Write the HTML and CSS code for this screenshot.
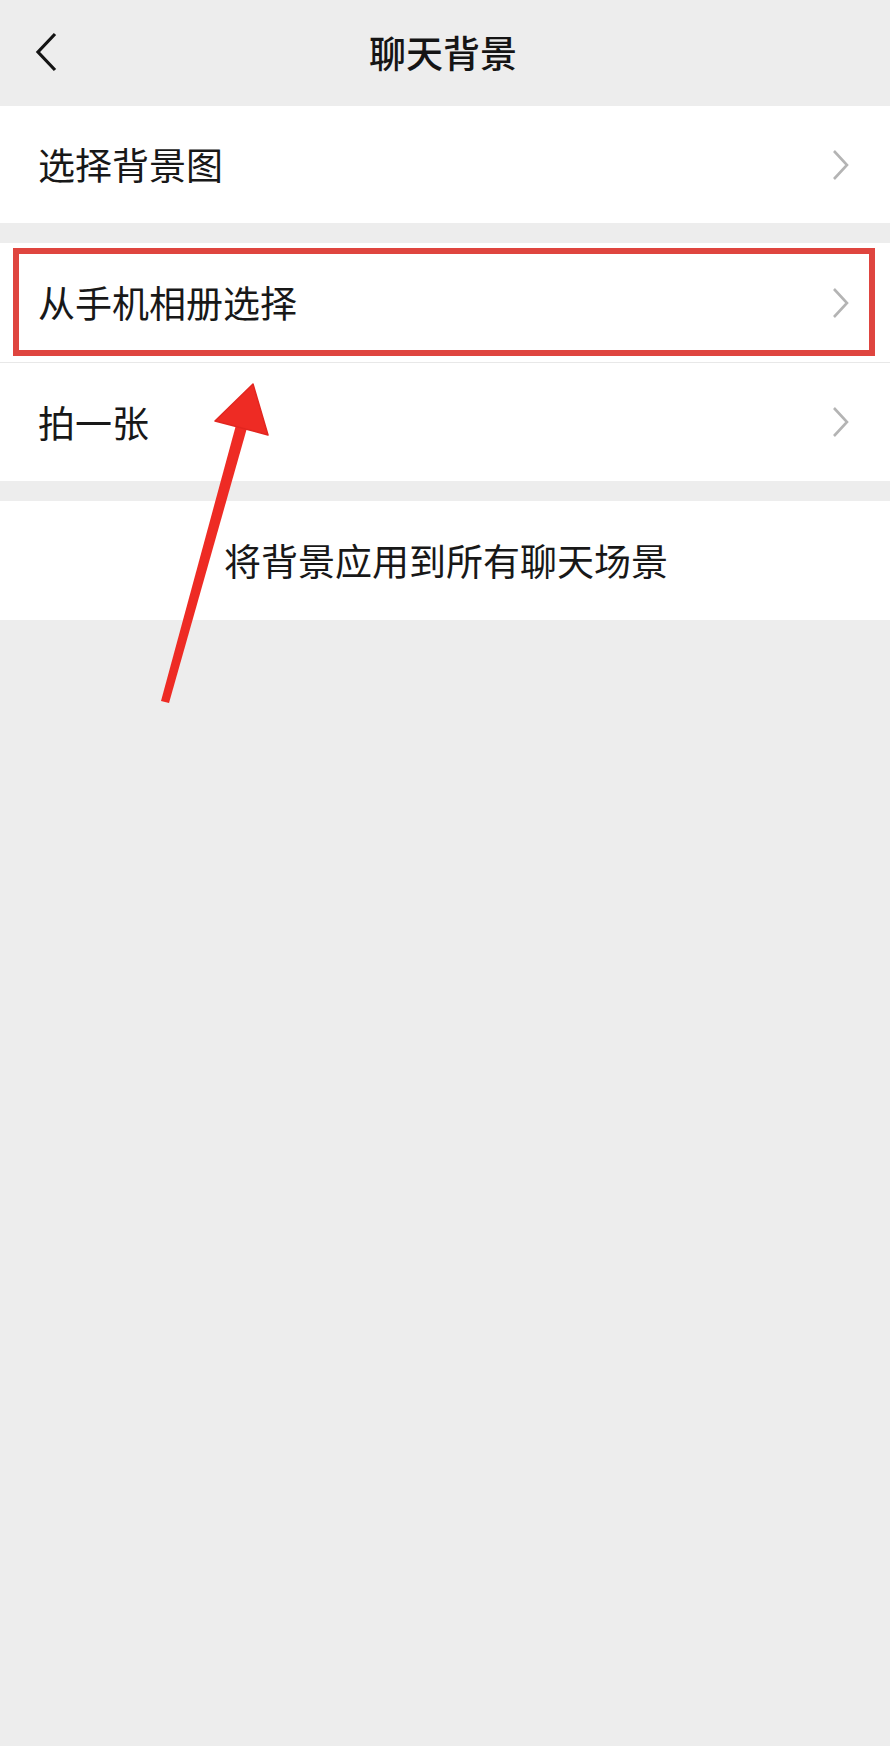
FILE: index.html
```html
<!DOCTYPE html>
<html lang="zh-CN">
<head>
<meta charset="utf-8">
<title>聊天背景</title>
<link rel="stylesheet" href="styles.css">
</head>
<body>
<div class="page">
  <header class="topbar">
    <span class="back">
      <svg width="24" height="40" viewBox="0 0 24 40"><path d="M20 2 L3 20 L20 38" fill="none" stroke="#141414" stroke-width="3.2" stroke-linejoin="miter"/></svg>
    </span>
    <h1 class="title">聊天背景</h1>
  </header>

  <section class="group">
    <div class="row first"><span class="label">选择背景图</span><span class="chev"><svg width="18" height="30" viewBox="0 0 18 30"><path d="M2 1 L15 15 L2 29" fill="none" stroke="#b4b4b4" stroke-width="2.6"/></svg></span></div>
  </section>

  <section class="group">
    <div class="row highlight"><span class="label">从手机相册选择</span><span class="chev"><svg width="18" height="30" viewBox="0 0 18 30"><path d="M2 1 L15 15 L2 29" fill="none" stroke="#b4b4b4" stroke-width="2.6"/></svg></span><span class="redbox"></span></div>
    <div class="row sep"><span class="label">拍一张</span><span class="chev"><svg width="18" height="30" viewBox="0 0 18 30"><path d="M2 1 L15 15 L2 29" fill="none" stroke="#b4b4b4" stroke-width="2.6"/></svg></span></div>
  </section>

  <section class="group">
    <div class="row center"><span class="label">将背景应用到所有聊天场景</span></div>
  </section>

  <svg class="arrow" width="890" height="760" viewBox="0 0 890 760">
    <polygon points="161,701 169,703 247,428 236,425" fill="#ee2b24"/>
    <polygon points="253,384 215,421 268,435" fill="#ee2b24" stroke="#e22620" stroke-width="1.5" stroke-linejoin="round"/>
  </svg>
</div>
</body>
</html>
```

FILE: styles.css
```css
* { box-sizing: border-box; margin: 0; padding: 0; }
html, body { background: #ededed; }
body {
  width: 890px;
  min-height: 1746px;
  font-family: "Noto Sans CJK SC", "Noto Sans", sans-serif;
  color: #181818;
}
.page { position: relative; width: 890px; min-height: 1746px; }
.topbar {
  height: 106px;
  display: flex;
  align-items: center;
  justify-content: center;
  position: relative;
}
.back {
  position: absolute;
  left: 35px;
  top: 32px;
  display: flex;
}
.title {
  font-size: 37px;
  font-weight: 500;
  line-height: 1;
  color: #151515;
  margin-top: -2px;
  margin-right: 4px;
}
.group { background: #fff; margin-bottom: 20px; }
.row {
  position: relative;
  height: 119px;
  display: flex;
  align-items: center;
  justify-content: space-between;
  padding: 0 40px 0 38px;
}
.first { height: 117px; }
.sep { border-top: 1px solid #e8e8e8; }
.label { font-size: 37px; line-height: 1; }
.chev { display: flex; }
.center { justify-content: center; padding: 0 0 0 2px; }
.redbox {
  position: absolute;
  left: 13px;
  right: 15px;
  top: 5px;
  bottom: 6px;
  border: 6px solid #df453f;
}
.arrow { position: absolute; left: 0; top: 0; }
```
